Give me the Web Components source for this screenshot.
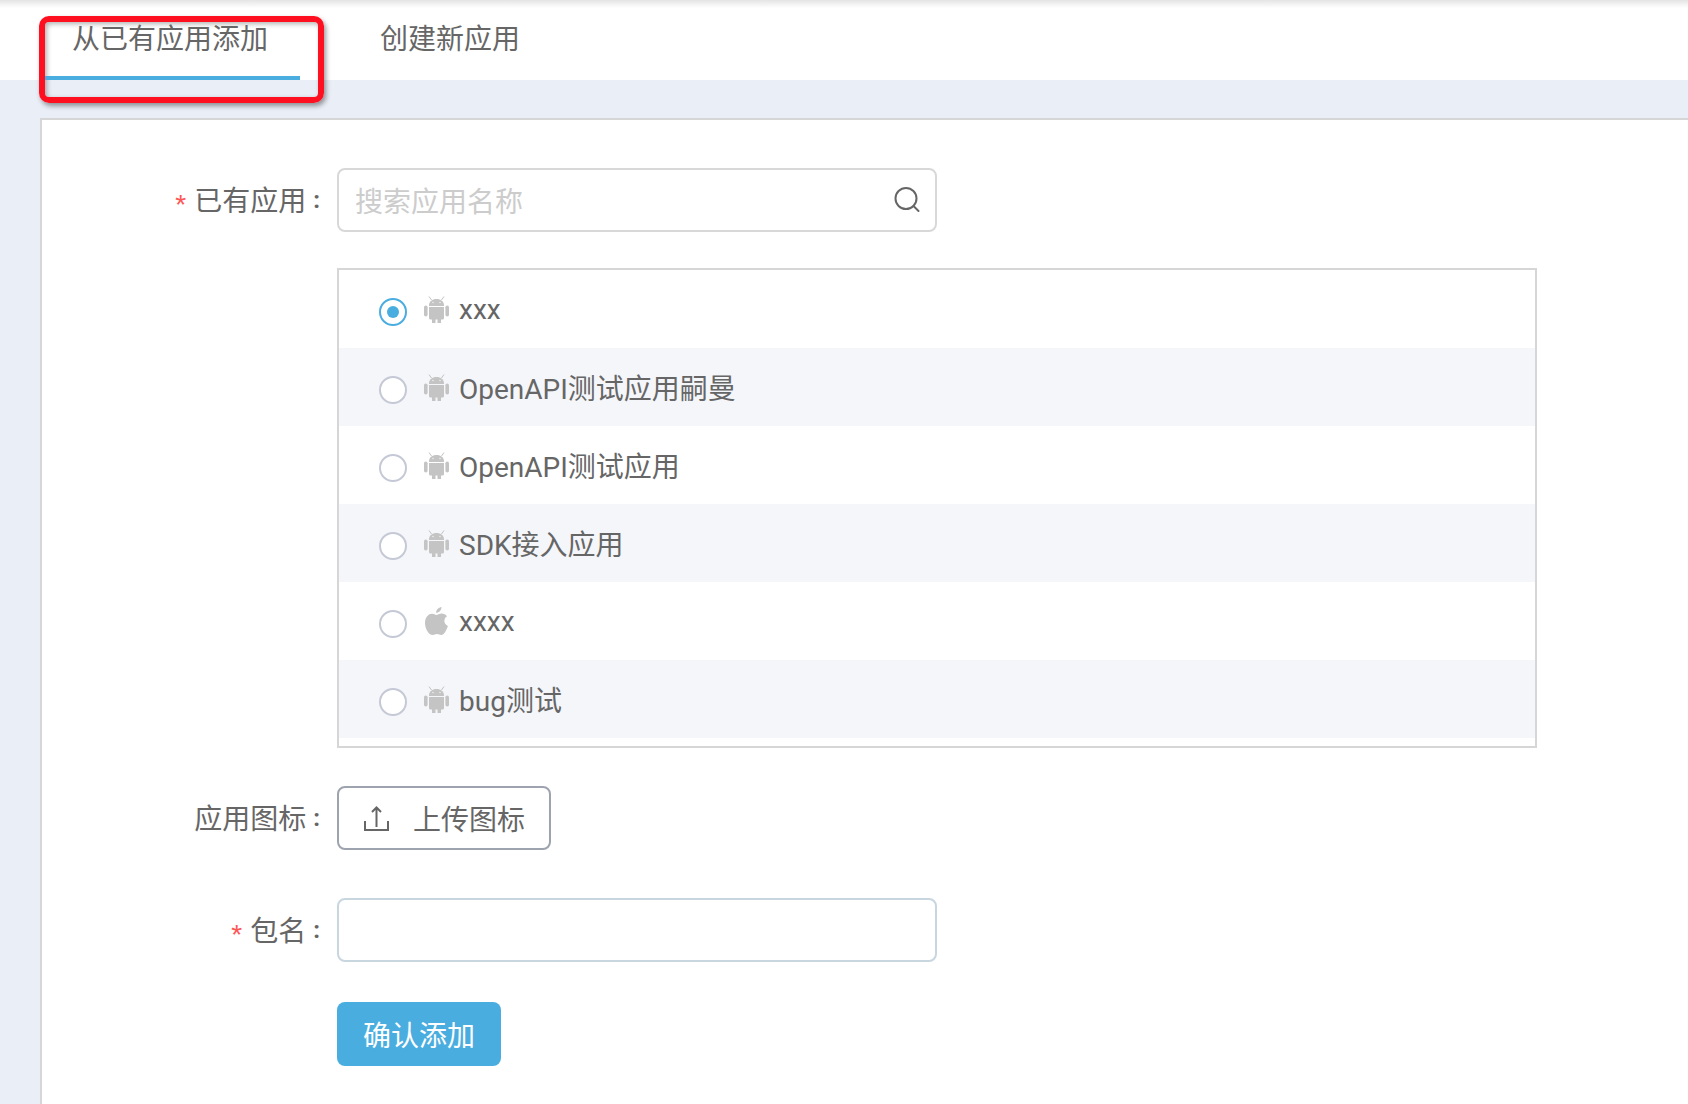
<!DOCTYPE html>
<html lang="zh-CN"><head><meta charset="utf-8">
<style>
html,body{margin:0;padding:0;height:1104px;overflow:hidden;background:#eaeef6}
body{font-family:Roboto,"Noto Sans CJK SC",sans-serif;color:#666}
</style></head><body>
<template id="android"><svg width="25" height="28" viewBox="0 0 25 28" fill="#c4c4c4" style="display:block"><path d="M5 1.500 7.500 5M20 1.500 17.500 5" stroke="#c4c4c4" stroke-width="1" fill="none"/><path d="M5 10.200C5 6.500 8.300 4 12.500 4S20 6.500 20 10.200V11H5Z"/><rect x="0" y="10.500" width="3.600" height="11" rx="1.800"/><rect x="21.400" y="10.500" width="3.600" height="11" rx="1.800"/><path d="M5 12h15v11a1.500 1.500 0 0 1-1.500 1.500H17V28h-3.500v-3.500h-2V28H8v-3.500H6.500A1.500 1.500 0 0 1 5 23Z"/><circle cx="9" cy="7.500" r=".8" fill="#eee"/><circle cx="16" cy="7.500" r=".8" fill="#eee"/></svg></template>
<template id="apple"><svg width="25" height="28" viewBox="0 0 25 28" fill="#c4c4c4" style="display:block"><path d="M17.500 0c.2 2.800-2.300 5.700-5.400 5.800C12 3 14.500.3 17.500 0Z"/><path d="M12.300 8c1.300 0 3-1.500 5.500-1.500 1.700 0 3.900.8 5.200 2.800-3.900 2.300-3.300 8 .9 9.600-1.200 3.800-3.900 9.100-6.600 9.100-1.600 0-2.400-1-4.300-1s-2.900 1-4.300 1C4.500 28 1 21.500 1 16 1 10.200 4.500 6.800 8 6.800c1.900 0 3.200 1.200 4.300 1.200Z"/></svg></template>

<tab-bar><tab-item active>从已有应用添加</tab-item><tab-item>创建新应用</tab-item></tab-bar>
<red-mark></red-mark>
<page-body>
 <form-row required label="已有应用"><search-input placeholder="搜索应用名称"></search-input></form-row>
 <form-row style="margin-top:36px">
  <app-list>
   <app-row checked icon="android">xxx</app-row>
   <app-row icon="android">OpenAPI测试应用嗣曼</app-row>
   <app-row icon="android">OpenAPI测试应用</app-row>
   <app-row icon="android">SDK接入应用</app-row>
   <app-row icon="apple">xxxx</app-row>
   <app-row icon="android">bug测试</app-row>
  </app-list>
 </form-row>
 <form-row style="margin-top:38px" label="应用图标"><upload-button>上传图标</upload-button></form-row>
 <form-row style="margin-top:48px" required label="包名"><text-box></text-box></form-row>
 <form-row style="margin-top:40px"><primary-button>确认添加</primary-button></form-row>
</page-body>

<script>
const define=(name,css,html,extra)=>{
  customElements.define(name,class extends HTMLElement{
    constructor(){super();this.attachShadow({mode:'open'}).innerHTML=`<style>${css}</style>${typeof html==='function'?html(this):html}`;}
    connectedCallback(){if(extra)extra(this);}
  });
};
define('tab-bar',`:host{display:flex;height:80px;background:#fff;padding-left:45px;position:relative;box-sizing:border-box}
:host::before{content:"";position:absolute;left:0;right:0;top:0;height:8px;background:linear-gradient(#e4e4e4,#fff)}`,`<slot></slot>`);
define('tab-item',`:host{display:block;box-sizing:border-box;height:80px;font-size:28px;line-height:80px;padding:0 32px 0 27px;margin-right:53px;position:relative;z-index:1;white-space:nowrap}
:host([active]){border-bottom:4px solid #4aaddf}`,`<slot></slot>`);
define('red-mark',`:host{position:absolute;left:39px;top:16px;width:285px;height:87px;box-sizing:border-box;border:6px solid #ff1020;border-radius:10px;box-shadow:2px 3px 5px rgba(0,0,0,.4),inset 2px 2px 5px rgba(0,0,0,.3)}`,``);
define('page-body',`:host{display:flex;flex-direction:column;box-sizing:border-box;margin:38px 0 0 40px;height:986px;background:#fff;border:solid #d6d6d6;border-width:2px 0 0 2px;padding-top:48px}`,`<slot></slot>`);
define('form-row',`:host{display:flex;align-items:flex-start}
.l{box-sizing:border-box;width:295px;height:64px;padding-right:16px;display:flex;align-items:center;justify-content:flex-end;font-size:28px;white-space:nowrap;flex:none}
.s{color:#f55;margin-right:8px;font-size:28px;font-family:"Liberation Sans",sans-serif;line-height:1;position:relative;top:5px}
.t{position:relative;top:-1px}
.c{margin-right:1px;margin-left:7px;font-weight:700;font-size:24px}`,
 h=>{const L=h.getAttribute('label');return `<div class="l">${L?`${h.hasAttribute('required')?'<span class="s">*</span>':''}<span class="t">${L}</span><span class="c">:</span>`:''}</div><slot></slot>`});
const boxCss=`:host{display:flex;align-items:center;box-sizing:border-box;width:600px;height:64px;background:#fff;border-radius:8px;font-size:28px}`;
define('search-input',boxCss+`:host{border:2px solid #d8d8d8;padding:0 16px;justify-content:space-between;color:#ccc}svg{display:block;margin-right:-1px}`,
 h=>`<span>${h.getAttribute('placeholder')}</span><svg width="26" height="26" viewBox="0 0 26 26" fill="none" stroke="#666" stroke-width="2"><circle cx="12" cy="11.500" r="10.500"/><path d="M19.500 19l5 5" stroke-linecap="round"/></svg>`);
define('text-box',boxCss+`:host{border:2px solid #c8d6e0}`,``);
define('app-list',`:host{display:block;box-sizing:border-box;width:1200px;height:480px;border:2px solid #d6d6d6;background:#fff}`,`<slot></slot>`);
define('app-row',`:host{display:flex;align-items:center;box-sizing:border-box;height:78px;padding-left:40px;font-size:28px;white-space:nowrap}
:host(:nth-child(even)){background:#f5f6fa}
.r{box-sizing:border-box;width:28px;height:28px;border-radius:50%;border:2px solid #c5c9d6;background:#fff;margin-top:6px;display:flex;align-items:center;justify-content:center;flex:none}
:host([checked]) .r{border-color:#4aaddf}
:host([checked]) .r::after{content:"";width:12px;height:12px;border-radius:50%;background:#4aaddf}
.i{margin:0 10px 0 17px;flex:none}`,
 h=>`<span class="r"></span><span class="i" id="ic"></span><slot></slot>`,
 h=>{h.shadowRoot.getElementById('ic').appendChild(document.getElementById(h.getAttribute('icon')).content.cloneNode(true));});
define('upload-button',`:host{display:flex;align-items:center;box-sizing:border-box;width:214px;height:64px;border:2px solid #9ea3b0;border-radius:8px;font-size:28px;padding-left:25px;white-space:nowrap}svg{display:block;margin-right:24px}`,
 `<svg width="25" height="25" viewBox="0 0 25 25" fill="none" stroke="#666" stroke-width="2"><path d="M12.500 21V1.500M8 6l4.500-4.500L17 6M1 15v9h23v-9"/></svg><slot></slot>`);
define('primary-button',`:host{display:flex;align-items:center;justify-content:center;box-sizing:border-box;width:164px;height:64px;background:#4aaddf;color:#fff;border-radius:8px;font-size:28px;white-space:nowrap}`,`<slot></slot>`);
</script>
</body></html>
